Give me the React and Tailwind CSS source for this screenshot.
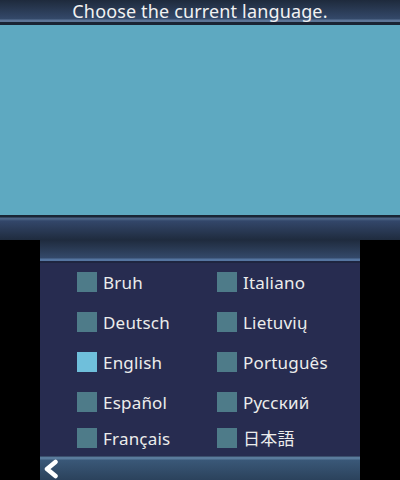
import React from "react";

const left = [
  { label: "Bruh" },
  { label: "Deutsch" },
  { label: "English", selected: true },
  { label: "Español" },
  { label: "Français" },
];
const right = [
  { label: "Italiano" },
  { label: "Lietuvių" },
  { label: "Português" },
  { label: "Русский" },
  { label: "日本語" },
];

function Item({ label, selected, className = "" }) {
  return (
    <div className={`flex items-center h-[20px] ${className}`}>
      <div className={`w-[20px] h-[20px] shrink-0 ${selected ? "bg-[#6fbfdb]" : "bg-[#4e7b89]"}`} />
      <span className="ml-[6px] text-[17px] leading-none text-[#ececec] whitespace-nowrap tracking-[0.2px]">{label}</span>
    </div>
  );
}

function Column({ items, className }) {
  return (
    <div className={`flex flex-col ${className}`}>
      {items.map((it, i) => (
        <Item
          key={it.label}
          {...it}
          className={i === 0 ? "" : i === 4 ? "mt-[16px]" : "mt-[20px]"}
        />
      ))}
    </div>
  );
}

export default function App() {
  return (
    <div
      className="w-[400px] h-[480px] flex flex-col bg-black overflow-hidden"
      style={{ fontFamily: '"Noto Sans", "Noto Sans CJK JP", sans-serif' }}
    >
      {/* Top screen */}
      <div className="h-[240px] flex flex-col">
        <div className="h-[25px] flex items-start justify-center bg-[linear-gradient(to_bottom,#1e2a3c_0px,#34496a_19px,#5d7596_20px,#5d7596_22px,#1a2434_22px,#1a2434_25px)]">
          <span className="text-[18px] leading-[22px] tracking-[0.15px] text-[#f2f2f2]">Choose the current language.</span>
        </div>
        <div className="flex-1 bg-[#5ea9c1]" />
        <div className="h-[25px] bg-[linear-gradient(to_bottom,#1a2636_0px,#1a2636_2px,#4b6385_3px,#4b6385_4px,#33476a_6px,#1f2b3e_25px)]" />
      </div>
      {/* Bottom screen */}
      <div className="h-[240px] flex">
        <div className="w-[40px] bg-black" />
        <div className="w-[320px] flex flex-col bg-[#272c50]">
          <div className="h-[23px] bg-[linear-gradient(to_bottom,#1f2b3e_0px,#34496a_18px,#5575a0_19px,#5575a0_21px,#1e2540_21px,#1e2540_23px)]" />
          <div className="flex-1 flex pt-[9px]">
            <Column items={left} className="ml-[37px] w-[140px]" />
            <Column items={right} className="" />
          </div>
          <div className="h-[24px] relative bg-[linear-gradient(to_bottom,#1e2540_0px,#5a7b9c_1px,#5a7b9c_3px,#3a5878_4px,#2b425c_24px)]">
            <svg className="absolute left-[2px] top-[3px]" width="18" height="20" viewBox="0 0 18 20">
              <path d="M13.5 3 L5 10 L13.5 17" fill="none" stroke="#ffffff" strokeWidth="4.5" strokeLinecap="round" strokeLinejoin="round" />
            </svg>
          </div>
        </div>
        <div className="w-[40px] bg-black" />
      </div>
    </div>
  );
}
